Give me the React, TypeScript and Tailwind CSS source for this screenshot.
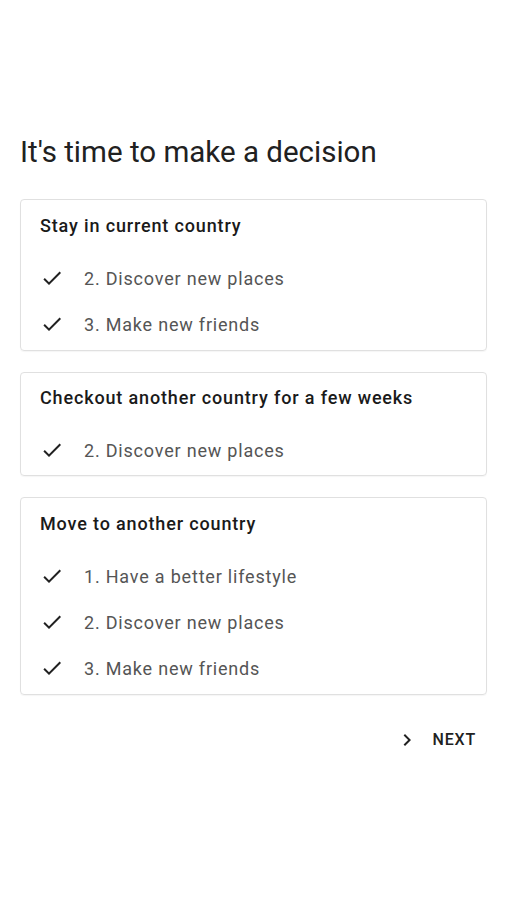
import React from "react";

const Check = () => (
  <svg width="24" height="24" viewBox="0 0 24 24" className="shrink-0">
    <path d="M9 16.17L4.83 12l-1.42 1.41L9 19 21 7l-1.41-1.41z" fill="#212121" />
  </svg>
);

const Chevron = () => (
  <svg width="24" height="24" viewBox="0 0 24 24" className="shrink-0">
    <path d="M10 6L8.59 7.41 13.17 12l-4.58 4.59L10 18l6-6z" fill="#212121" />
  </svg>
);

const cards = [
  { title: "Stay in current country", items: ["2. Discover new places", "3. Make new friends"], short: false },
  { title: "Checkout another country for a few weeks", items: ["2. Discover new places"], short: true },
  {
    title: "Move to another country",
    items: ["1. Have a better lifestyle", "2. Discover new places", "3. Make new friends"],
    short: false,
  },
];

export default function App() {
  return (
    <div
      className="w-[506px] h-[900px] bg-white pl-[20px] pr-[19px] pt-[134px]"
      style={{ fontFamily: "Roboto, 'Noto Sans', sans-serif" }}
    >
      <h1 className="text-[29.5px] leading-[36px] text-[#212121] font-normal">It's time to make a decision</h1>
      <div className="mt-[29px] flex flex-col gap-[21px]">
        {cards.map((c) => (
          <div
            key={c.title}
            className={`border border-[#e0e0e0] rounded-[4px] px-[19px] shadow-[0_1px_1px_rgba(0,0,0,0.04)] ${
              c.short ? "pt-[13px] pb-[2px]" : "pt-[14px] pb-[3px]"
            }`}
          >
            <div className="h-[24px] leading-[24px] text-[18px] font-medium tracking-[0.85px] text-[#1a1a1a]">
              {c.title}
            </div>
            <div className="mt-[17px]">
              {c.items.map((it) => (
                <div key={it} className="h-[46px] flex items-center gap-[20px]">
                  <Check />
                  <span className="text-[18px] tracking-[0.8px] text-[#555555]">{it}</span>
                </div>
              ))}
            </div>
          </div>
        ))}
      </div>
      <div className="mt-[33px] flex justify-end pr-[11px]">
        <button className="flex items-center gap-[14px] h-[24px]">
          <Chevron />
          <span className="text-[16px] font-medium tracking-[0.05em] text-[#212121]">NEXT</span>
        </button>
      </div>
    </div>
  );
}
